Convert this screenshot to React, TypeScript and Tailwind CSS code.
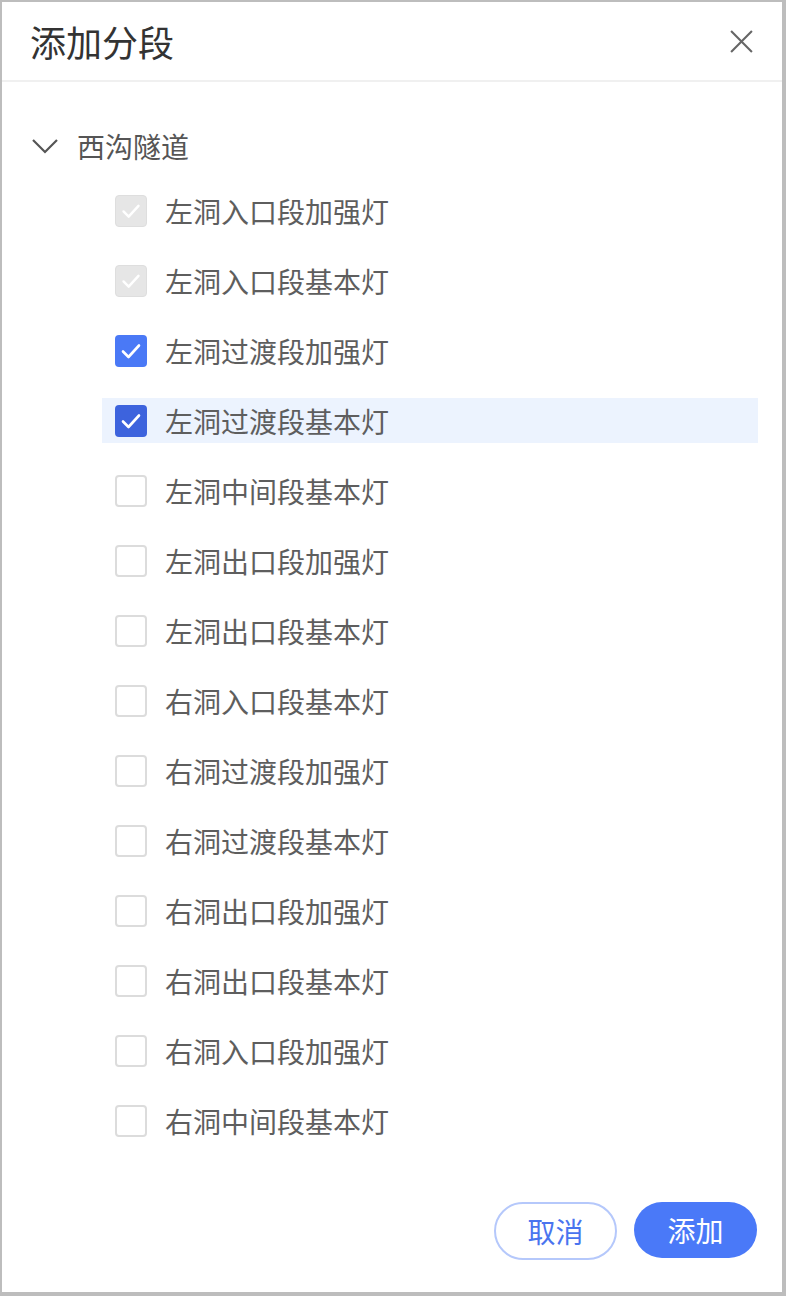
import React from "react";

type Item = { label: string; state: "disabled" | "checked" | "none" };

const items: Item[] = [
  { label: "左洞入口段加强灯", state: "disabled" },
  { label: "左洞入口段基本灯", state: "disabled" },
  { label: "左洞过渡段加强灯", state: "checked" },
  { label: "左洞过渡段基本灯", state: "checked" },
  { label: "左洞中间段基本灯", state: "none" },
  { label: "左洞出口段加强灯", state: "none" },
  { label: "左洞出口段基本灯", state: "none" },
  { label: "右洞入口段基本灯", state: "none" },
  { label: "右洞过渡段加强灯", state: "none" },
  { label: "右洞过渡段基本灯", state: "none" },
  { label: "右洞出口段加强灯", state: "none" },
  { label: "右洞出口段基本灯", state: "none" },
  { label: "右洞入口段加强灯", state: "none" },
  { label: "右洞中间段基本灯", state: "none" },
];

const Check = () => (
  <svg viewBox="0 0 32 32" className="w-8 h-8">
    <polyline
      points="8,16.5 13.5,22 24,10.5"
      fill="none"
      stroke="white"
      strokeWidth="2.6"
      strokeLinecap="round"
      strokeLinejoin="round"
    />
  </svg>
);

const Checkbox = ({ state, hover }: { state: Item["state"]; hover: boolean }) => {
  if (state === "disabled") {
    return (
      <span className="w-8 h-8 rounded-[4px] bg-[#e6e6e6] border border-[#dedede] flex items-center justify-center shrink-0">
        <Check />
      </span>
    );
  }
  if (state === "checked") {
    return (
      <span
        className={
          hover
            ? "w-8 h-8 rounded-[4px] bg-[#3d63dd] flex items-center justify-center shrink-0"
            : "w-8 h-8 rounded-[4px] bg-[#4a79f6] flex items-center justify-center shrink-0"
        }
      >
        <Check />
      </span>
    );
  }
  return <span className="w-8 h-8 rounded-[4px] bg-white border-2 border-[#dcdcdc] shrink-0" />;
};

const App = () => {
  return (
    <div
      className="w-[786px] h-[1296px] bg-white border-l-2 border-t-2 border-r-4 border-b-4 border-[#bdbdbd] flex flex-col"
      style={{ fontFamily: '"Noto Sans CJK SC", "Noto Sans", sans-serif' }}
    >
      <header className="h-[80px] flex items-center justify-between pl-[28px] pr-[28px] border-b-2 border-[#f0f0f0]">
        <h1 className="text-[36px] text-[#333333] font-normal leading-none">添加分段</h1>
        <svg viewBox="0 0 24 24" className="w-[25px] h-[25px] text-[#666666]">
          <path d="M2 2 L22 22 M22 2 L2 22" stroke="currentColor" strokeWidth="2" fill="none" />
        </svg>
      </header>

      <div className="flex-1 pt-[41px] pl-[29px] pr-[24px]">
        <div className="h-[45px] flex items-center gap-[18px]">
          <svg viewBox="0 0 28 20" className="w-[28px] h-[20px] text-[#555555]">
            <polyline points="2,4 14,16 26,4" fill="none" stroke="currentColor" strokeWidth="2.2" />
          </svg>
          <span className="text-[28px] text-[#555555] leading-none">西沟隧道</span>
        </div>

        <ul className="mt-[20px] ml-[71px] flex flex-col gap-[25px]">
          {items.map((it, i) => {
            const hover = i === 3;
            return (
              <li
                key={it.label}
                className={
                  hover
                    ? "h-[45px] flex items-center gap-[18px] pl-[13px] bg-[#ecf3fe]"
                    : "h-[45px] flex items-center gap-[18px] pl-[13px]"
                }
              >
                <Checkbox state={it.state} hover={hover} />
                <span className="text-[28px] text-[#5e5e5e] leading-none">{it.label}</span>
              </li>
            );
          })}
        </ul>
      </div>

      <footer className="flex justify-end gap-[17px] pr-[25px] pb-[32px]">
        <button className="w-[123px] h-[58px] rounded-full border-2 border-[#b5c8fb] text-[#4a74ef] text-[28px] bg-white">
          取消
        </button>
        <button className="w-[123px] h-[56px] rounded-full bg-[#4a79f8] text-white text-[28px]">
          添加
        </button>
      </footer>
    </div>
  );
};

export default App;
